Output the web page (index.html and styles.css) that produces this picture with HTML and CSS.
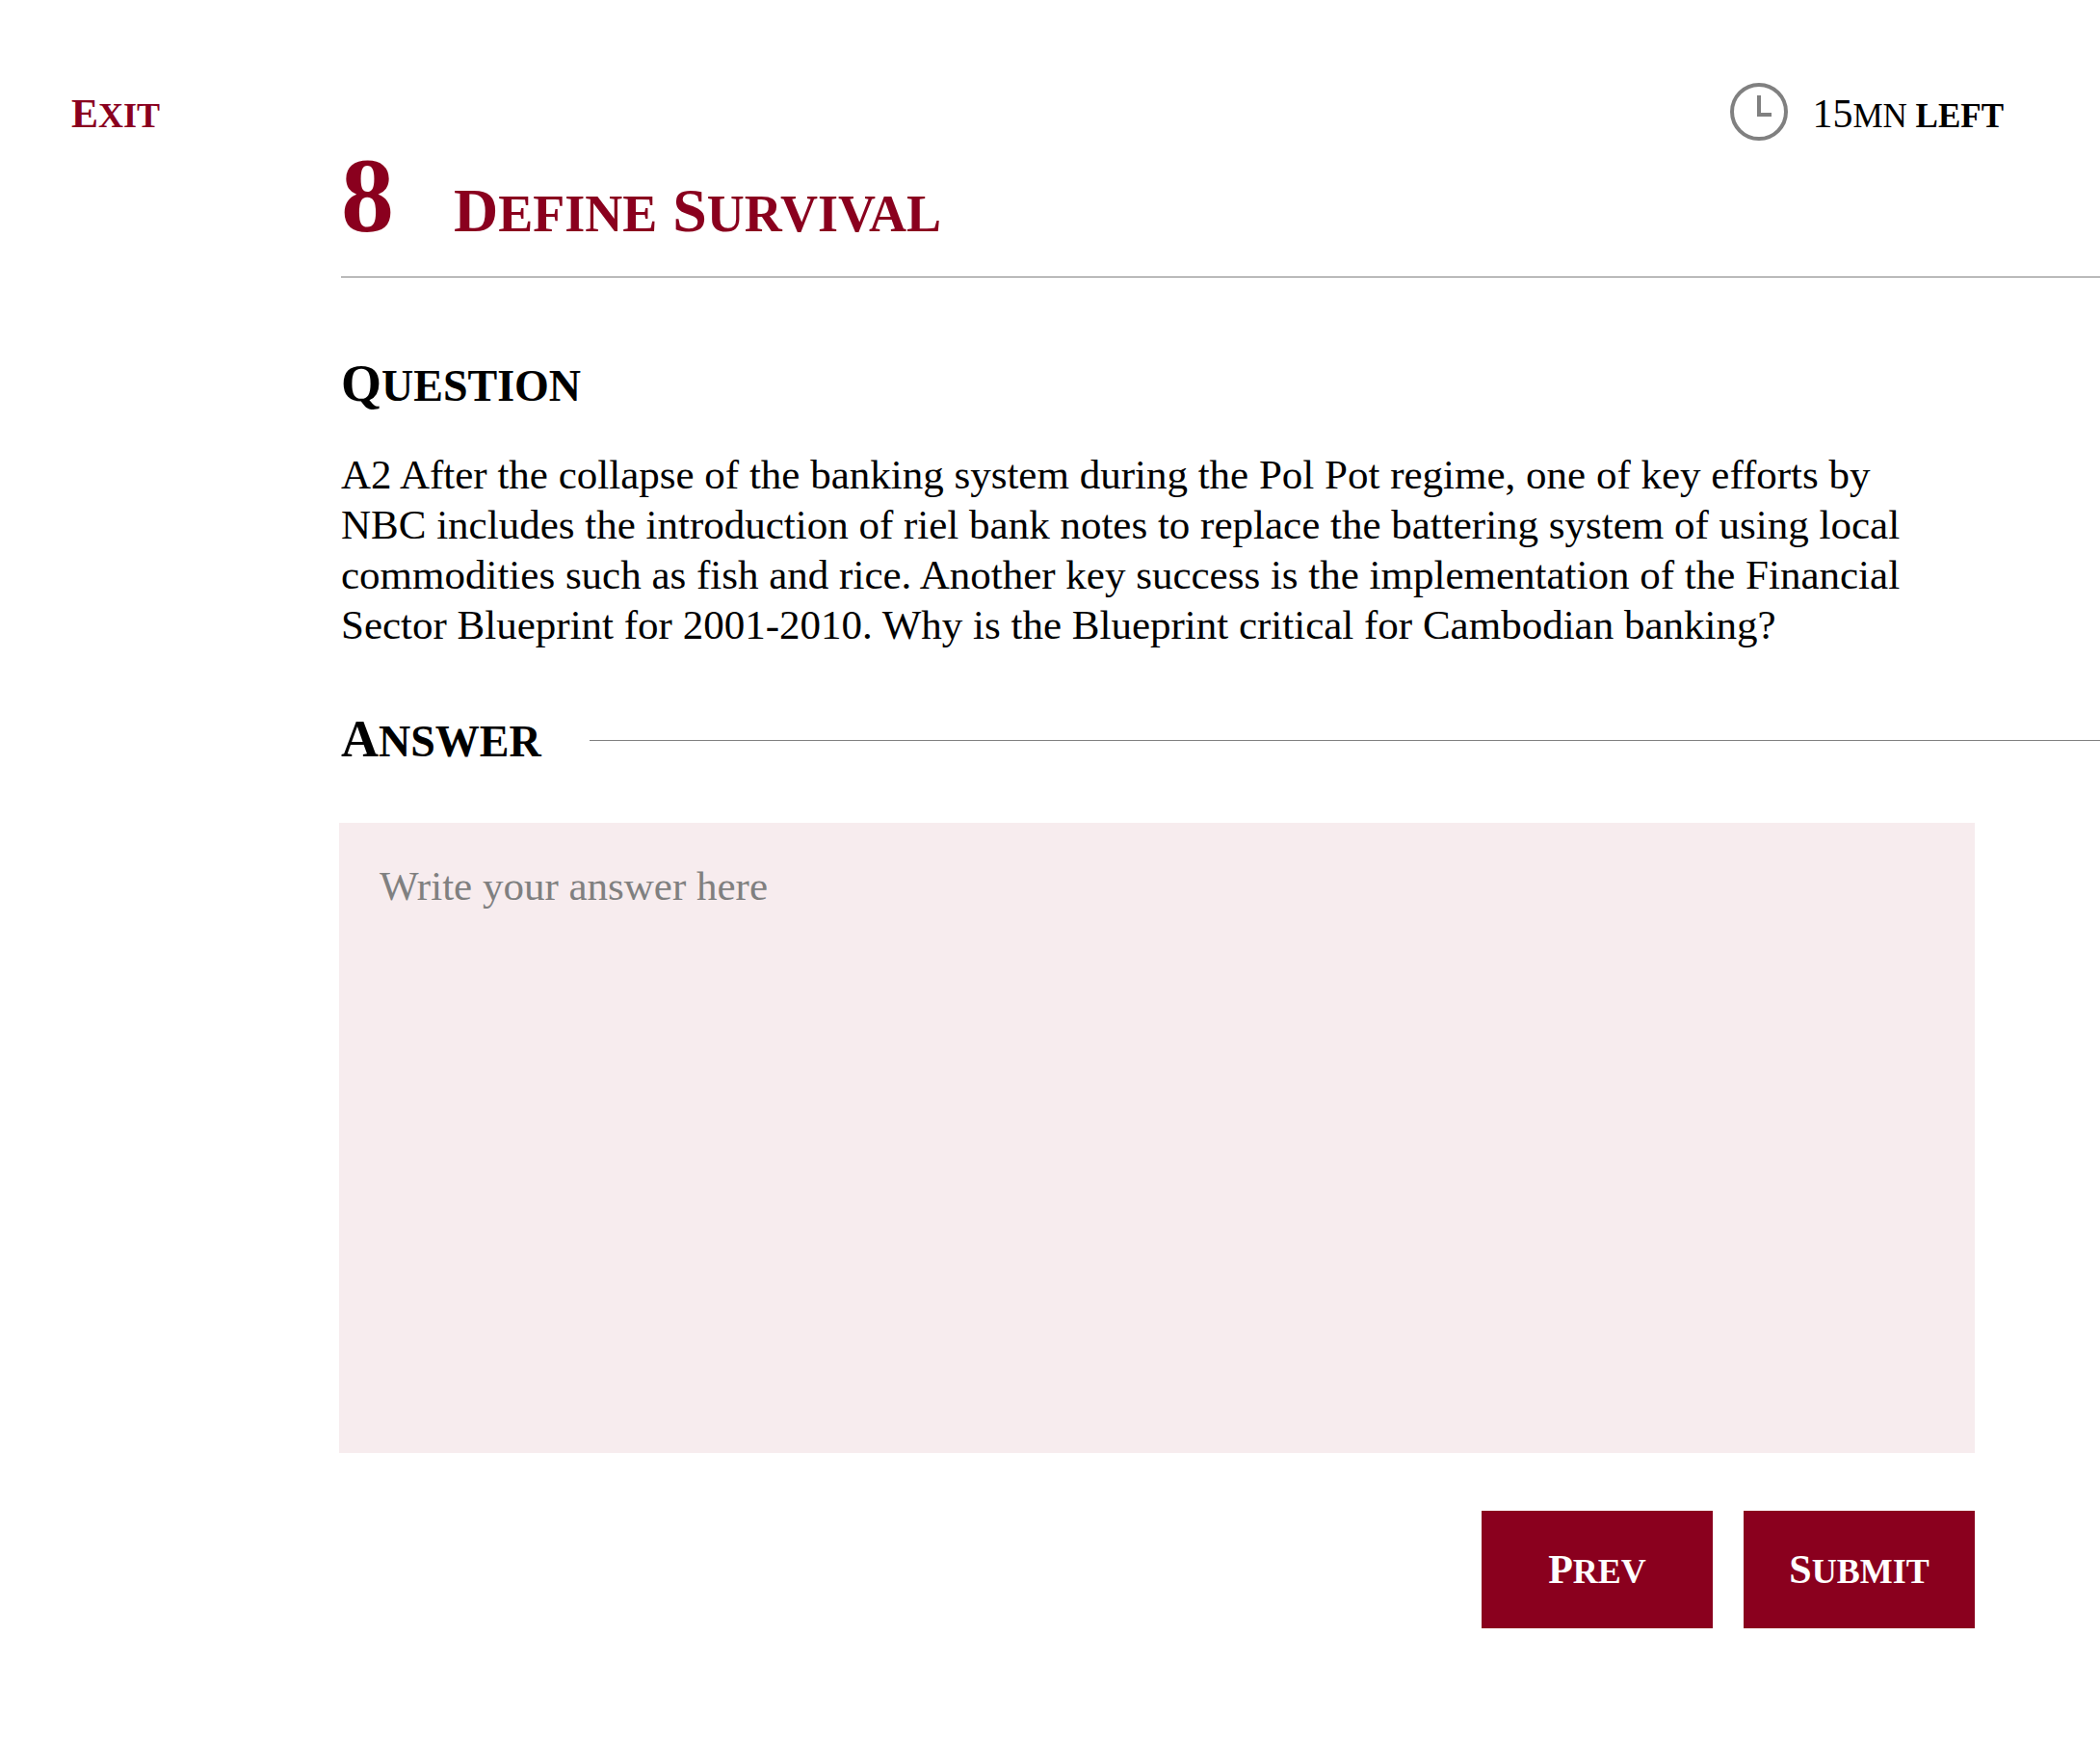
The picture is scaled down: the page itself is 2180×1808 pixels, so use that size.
FILE: index.html
```html
<!DOCTYPE html>
<html lang="en">
<head>
<meta charset="utf-8">
<meta name="viewport" content="width=device-width, initial-scale=1">
<title>Define Survival</title>
<link rel="stylesheet" href="styles.css">
</head>
<body>
<header class="topbar">
  <a class="exit caps" href="#">Exit</a>
  <div class="timer">
    <svg class="clock" viewBox="0 0 60 60" fill="none" stroke="#808080" stroke-width="4" aria-hidden="true">
      <circle cx="30" cy="30" r="28"/>
      <path d="M30 13V33H43"/>
    </svg>
    <p class="time"><span class="count">15</span>mn <strong>left</strong></p>
  </div>
</header>
<main class="content">
  <h1 class="title">
    <span class="number">8</span>
    <span class="name"><span class="caps">Define</span> <span class="caps">Survival</span></span>
  </h1>
  <section class="question">
    <h2 class="heading caps">Question</h2>
    <p class="text">A2 After the collapse of the banking system during the Pol Pot regime, one of key efforts by<br>
      NBC includes the introduction of riel bank notes to replace the battering system of using local<br>
      commodities such as fish and rice. Another key success is the implementation of the Financial<br>
      Sector Blueprint for 2001-2010. Why is the Blueprint critical for Cambodian banking?</p>
  </section>
  <div class="answer-head">
    <h2 class="heading caps"><label for="answer">Answer</label></h2>
    <hr class="rule">
  </div>
  <form class="answer">
    <textarea class="field" id="answer" placeholder="Write your answer here"></textarea>
    <div class="actions">
      <button class="button" type="button"><span class="caps">Prev</span></button>
      <button class="button" type="submit"><span class="caps">Submit</span></button>
    </div>
  </form>
</main>
</body>
</html>
```

FILE: styles.css
```css
* {
  box-sizing: border-box;
}

body {
  margin: 0;
  background: #fff;
  color: #000;
  font-family: "Liberation Serif", "Times New Roman", serif;
}

h1, h2, p {
  margin: 0;
}

/* Titling capitals: a tall initial followed by slightly shorter letters */
.caps {
  display: inline-block;
  text-transform: uppercase;
  font-weight: bold;
  font-size: 36px;
}

.caps::first-letter {
  font-size: 42px;
}

.topbar {
  display: flex;
  justify-content: space-between;
  align-items: center;
  padding: 86px 100px 0 74px;
}

.exit {
  padding-top: 4px;
  color: #8a001e;
  text-decoration: none;
}

.timer {
  display: flex;
  align-items: center;
  gap: 25px;
}

.clock {
  width: 60px;
  height: 60px;
}

.time {
  padding-top: 6px;
  font-size: 35px;
  line-height: 48px;
  text-transform: uppercase;
}

.count {
  font-size: 42px;
}

.content {
  padding: 0 0 118px 354px;
}

.title {
  display: flex;
  align-items: baseline;
  gap: 62px;
  padding-bottom: 27px;
  border-bottom: 1px solid #808080;
  color: #8a001e;
  line-height: 114px;
}

.number {
  font-size: 110px;
}

.name {
  font-size: 64px;
  line-height: 72px;
}

.name .caps {
  font-size: 54px;
}

.name .caps::first-letter {
  font-size: 64px;
}

.question {
  padding: 80px 130px 62px 0;
}

.heading {
  display: block;
  font-size: 46px;
  line-height: 60px;
}

.heading::first-letter {
  font-size: 54px;
}

.text {
  margin-top: 36px;
  font-size: 43px;
  line-height: 52px;
}

.answer-head {
  display: flex;
  align-items: center;
  gap: 50px;
}

.rule {
  flex: 1;
  height: 1px;
  margin: 0;
  border: 0;
  background: #808080;
}

.answer {
  margin: 54px 130px 0 -2px;
}

.field {
  display: block;
  width: 100%;
  height: 654px;
  padding: 40px 42px;
  border: 0;
  border-radius: 0;
  background: #f7ecee;
  color: #000;
  font-family: inherit;
  font-size: 43px;
  line-height: 52px;
  resize: none;
}

.field::placeholder {
  color: #808080;
  opacity: 1;
}

.actions {
  display: flex;
  justify-content: flex-end;
  gap: 32px;
  margin-top: 60px;
}

.button {
  width: 240px;
  height: 122px;
  padding: 0;
  border: 0;
  background: #8a001e;
  color: #fff;
  font-family: inherit;
}
```
